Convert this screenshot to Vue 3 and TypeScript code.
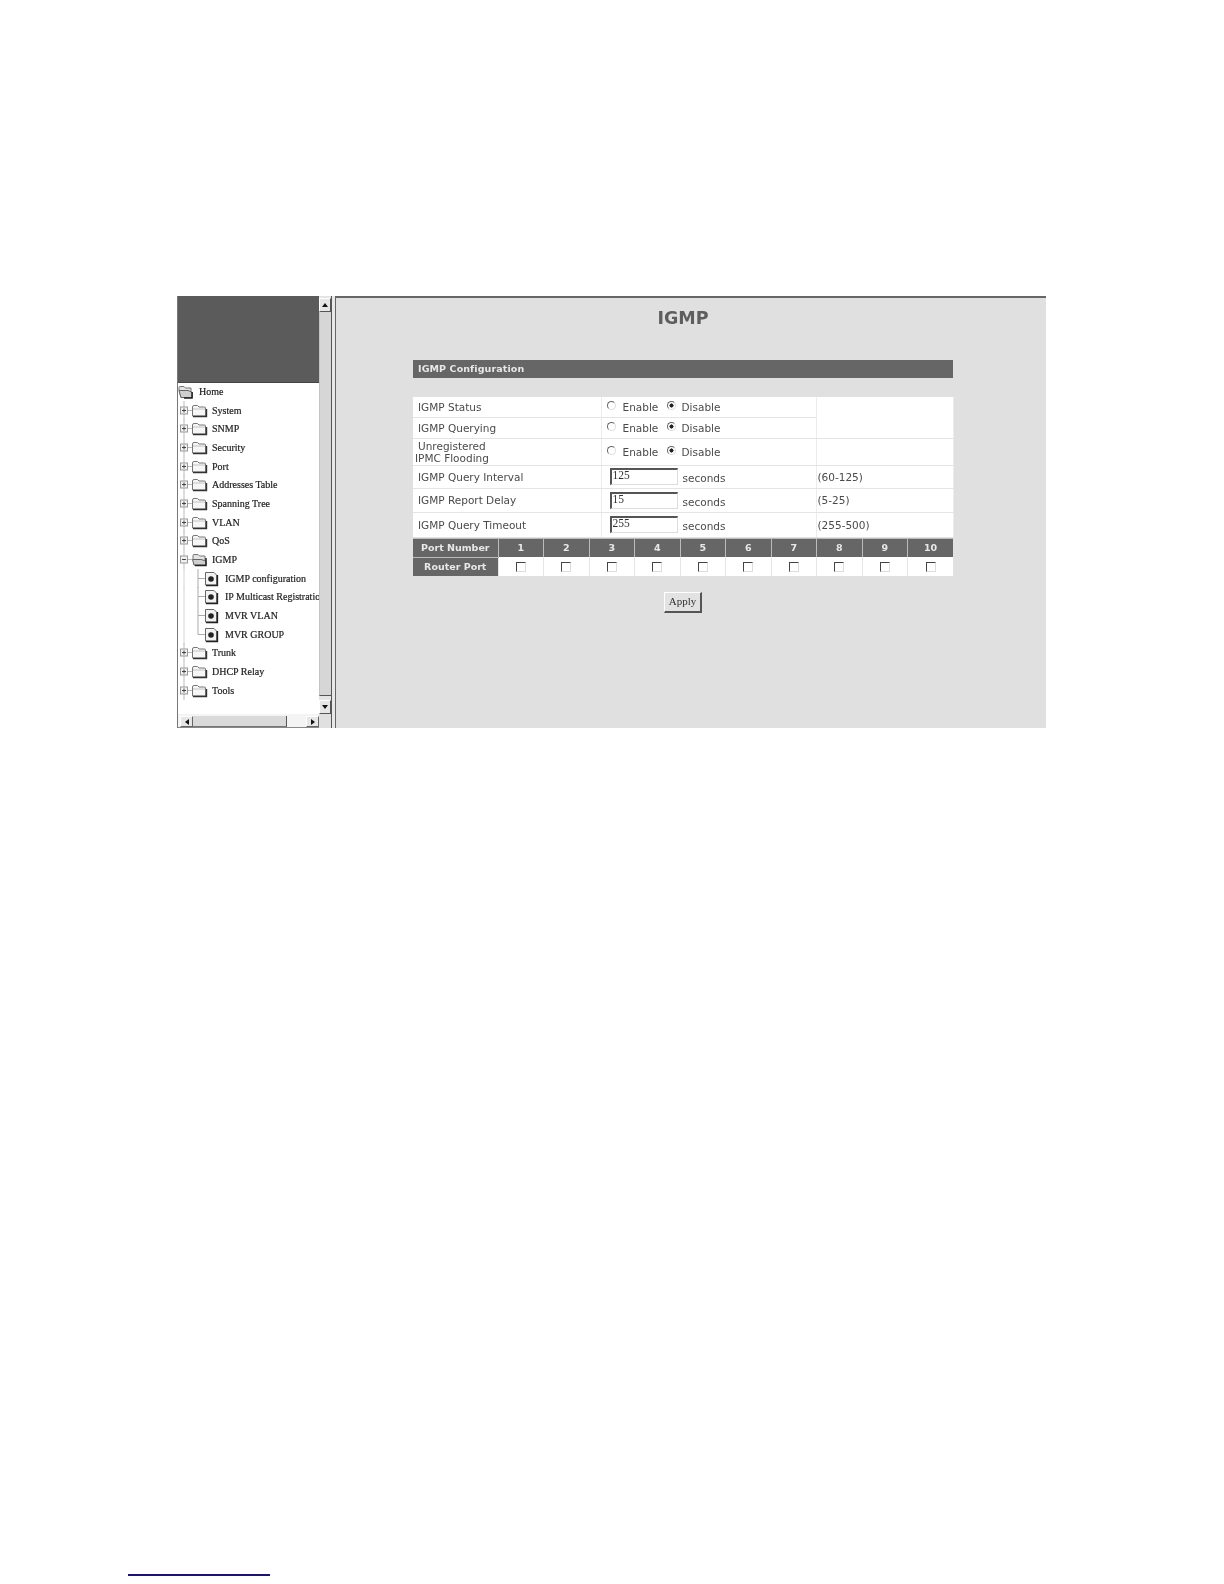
<script setup lang="ts">
type Kind = 'root' | 'closed' | 'open' | 'leaf'
interface TreeRow { label: string; kind: Kind }

const tree: TreeRow[] = [
  { label: 'Home', kind: 'root' },
  { label: 'System', kind: 'closed' },
  { label: 'SNMP', kind: 'closed' },
  { label: 'Security', kind: 'closed' },
  { label: 'Port', kind: 'closed' },
  { label: 'Addresses Table', kind: 'closed' },
  { label: 'Spanning Tree', kind: 'closed' },
  { label: 'VLAN', kind: 'closed' },
  { label: 'QoS', kind: 'closed' },
  { label: 'IGMP', kind: 'open' },
  { label: 'IGMP configuration', kind: 'leaf' },
  { label: 'IP Multicast Registration', kind: 'leaf' },
  { label: 'MVR VLAN', kind: 'leaf' },
  { label: 'MVR GROUP', kind: 'leaf' },
  { label: 'Trunk', kind: 'closed' },
  { label: 'DHCP Relay', kind: 'closed' },
  { label: 'Tools', kind: 'closed' },
]

const ports = [1, 2, 3, 4, 5, 6, 7, 8, 9, 10]
const intervals = [
  { label: 'IGMP Query Interval', value: '125', range: '(60-125)', cls: 'r4' },
  { label: 'IGMP Report Delay', value: '15', range: '(5-25)', cls: 'r5' },
  { label: 'IGMP Query Timeout', value: '255', range: '(255-500)', cls: 'r6' },
]
</script>

<template>
  <div class="page">
    <div class="frame">
      <aside class="side">
        <div class="tree">
          <div class="tree-head"></div>
          <ul class="tree-list">
            <li v-for="row in tree" :key="row.label" class="tree-row" :class="row.kind">
              <svg v-if="row.kind === 'root'" class="ico" width="21" height="19" viewBox="0 0 21 19">
                <path d="M1 8 V5.5 Q1 4.5 2 4.5 H6 L7.5 6 H13 V15.5 H3 Z" fill="#e4e4e4" stroke="#777" />
                <path d="M1 8.5 H10 L14.5 10.5 V15.5 H3 Z" fill="#cfcfcf" stroke="#666" />
                <path d="M14 10 V16 H6" stroke="#222" stroke-width="1.5" fill="none" />
              </svg>
              <svg v-else-if="row.kind === 'closed'" class="ico" width="34" height="19" viewBox="0 0 34 19">
                <path d="M6 0 V19 M9 9.5 H14" stroke="#bbb" fill="none" />
                <rect x="2.5" y="6" width="7" height="7" fill="#f0f0f0" stroke="#999" />
                <path d="M4 9.5 H8 M6 7.5 V11.5" stroke="#444" />
                <path d="M14.5 15 V6 Q14.5 4.5 16 4.5 H19.5 L21 6 H26.5 Q27.5 6 27.5 7 V15 Z" fill="#f6f6f6" stroke="#777" />
                <path d="M15 15.5 H28.5 V8" stroke="#333" fill="none" stroke-width="1.4" />
                <path d="M15 8 H27" stroke="#c4c4c4" />
              </svg>
              <svg v-else-if="row.kind === 'open'" class="ico" width="34" height="19" viewBox="0 0 34 19">
                <path d="M6 0 V19 M9 9.5 H14" stroke="#bbb" fill="none" />
                <rect x="2.5" y="6" width="7" height="7" fill="#f0f0f0" stroke="#999" />
                <path d="M4 9.5 H8" stroke="#444" />
                <path d="M15 9 V5.5 Q15 4.5 16 4.5 H20 L21.5 6 H27 V15 H16 Z" fill="#e4e4e4" stroke="#777" />
                <path d="M14.5 9.5 H23 L28 11 V15 H16 Z" fill="#cfcfcf" stroke="#666" />
                <path d="M28 8 V15.5 H17" stroke="#222" stroke-width="1.5" fill="none" />
              </svg>
              <svg v-else class="ico" width="47" height="19" viewBox="0 0 47 19">
                <path d="M6 0 V19" stroke="#d4d4d4" fill="none" />
                <path v-if="row.label !== 'MVR GROUP'" d="M20 0 V19 M20 9.5 H27" stroke="#aaa" fill="none" />
                <path v-else d="M20 0 V9.5 H27" stroke="#aaa" fill="none" />
                <path d="M27.5 3.5 H36 L38.5 6 V16 H27.5 Z" fill="#f2f2f2" stroke="#666" />
                <circle cx="33" cy="10" r="2.8" fill="#222" />
                <path d="M28 16.5 H39.5 V6" stroke="#222" fill="none" stroke-width="1.3" />
              </svg>
              <span class="tree-label">{{ row.label }}</span>
            </li>
          </ul>
        </div>

        <div class="vbar">
          <div class="sbtn up"><i class="tri tri-up"></i></div>
          <div class="vtrack"></div>
          <div class="sbtn down"><i class="tri tri-down"></i></div>
        </div>

        <div class="hbar">
          <div class="hbtn"><i class="tri tri-left"></i></div>
          <div class="hthumb"></div>
          <div class="htrack"></div>
          <div class="hbtn"><i class="tri tri-right"></i></div>
        </div>
        <div class="corner"></div>
      </aside>

      <div class="divider"></div>

      <main class="main">
        <div class="content">
          <h1 class="title">IGMP</h1>
          <div class="bar">IGMP Configuration</div>

          <table class="config">
            <colgroup>
              <col class="c1" />
              <col class="c2" />
              <col class="c3" />
            </colgroup>
            <tbody>
              <tr class="r1">
                <td class="name">IGMP Status</td>
                <td>
                  <div class="choice">
                    <input class="radio" type="radio" name="status" />
                    <span class="opt-a">Enable</span>
                    <input class="radio" type="radio" name="status" checked />
                    <span>Disable</span>
                  </div>
                </td>
                <td rowspan="2"></td>
              </tr>
              <tr class="r2">
                <td class="name">IGMP Querying</td>
                <td>
                  <div class="choice">
                    <input class="radio" type="radio" name="query" />
                    <span class="opt-a">Enable</span>
                    <input class="radio" type="radio" name="query" checked />
                    <span>Disable</span>
                  </div>
                </td>
              </tr>
              <tr class="r3">
                <td class="name two">
                  <span class="first">Unregistered</span><br />IPMC Flooding
                </td>
                <td>
                  <div class="choice">
                    <input class="radio" type="radio" name="flood" />
                    <span class="opt-a">Enable</span>
                    <input class="radio" type="radio" name="flood" checked />
                    <span>Disable</span>
                  </div>
                </td>
                <td></td>
              </tr>
              <tr v-for="item in intervals" :key="item.label" :class="item.cls">
                <td class="name">{{ item.label }}</td>
                <td>
                  <div class="valued">
                    <input class="num" type="text" :value="item.value" />
                    <span class="unit">seconds</span>
                  </div>
                </td>
                <td class="range">{{ item.range }}</td>
              </tr>
            </tbody>
          </table>

          <table class="ports">
            <colgroup>
              <col class="p1" />
              <col v-for="p in ports" :key="p" />
            </colgroup>
            <tbody>
              <tr>
                <th class="side-head">Port Number</th>
                <th v-for="p in ports" :key="p">{{ p }}</th>
              </tr>
              <tr>
                <th class="side-head">Router Port</th>
                <td v-for="p in ports" :key="p"><input class="check" type="checkbox" /></td>
              </tr>
            </tbody>
          </table>

          <div class="actions">
            <button class="apply" type="button">Apply</button>
          </div>
        </div>
      </main>
    </div>
    <div class="footnote"></div>
  </div>
</template>

<style scoped>
.page {
  box-sizing: border-box;
  width: 1224px;
  height: 1584px;
  padding: 296px 0 0 128px;
  background: #fff;
  overflow: hidden;
}
.frame {
  display: flex;
  width: 869px;
  height: 432px;
  margin-left: 49px;
  filter: blur(0.5px);
}

/* left tree frame */
.side {
  display: grid;
  grid-template-columns: 142px 13px;
  grid-template-rows: 418px 14px;
  width: 155px;
  flex: none;
}
.tree {
  display: flex;
  flex-direction: column;
  overflow: hidden;
  background: #fff;
  border-left: 1px solid #777;
}
.tree-head {
  height: 87px;
  flex: none;
  background: #5b5b5b;
  border-bottom: 1px solid #444;
  box-sizing: border-box;
}
.tree-list {
  list-style: none;
  margin: -1px 0 0;
  padding: 0;
}
.tree-row {
  display: flex;
  align-items: center;
  height: 18.7px;
  white-space: nowrap;
  font: 10px "Liberation Serif", serif;
  color: #222;
  -webkit-text-stroke: 0.2px #222;
}
.ico {
  flex: none;
  display: block;
}
.tree-label {
  line-height: 19px;
}

.vbar {
  display: flex;
  flex-direction: column;
  background: #e4e4e4;
  border-right: 1px solid #555;
  box-sizing: border-box;
  padding-top: 2px;
}
.sbtn {
  display: flex;
  align-items: center;
  justify-content: center;
  height: 12px;
  flex: none;
  background: #e6e6e6;
  border: 1px solid;
  border-color: #fff #555 #555 #fff;
}
.vtrack {
  flex: 1;
  margin-bottom: 4px;
  background: #d6d6d6;
  border-bottom: 1px solid #555;
  border-left: 1px solid #c4c4c4;
}
.hbar {
  display: flex;
  align-items: stretch;
  background: #f4f4f4;
  border-left: 1px solid #777;
  border-bottom: 1px solid #888;
  padding: 2px 0 0 2px;
}
.hbtn {
  display: flex;
  align-items: center;
  justify-content: center;
  width: 11px;
  flex: none;
  background: #e6e6e6;
  border: 1px solid;
  border-color: #fff #666 #666 #fff;
}
.hthumb {
  width: 93px;
  flex: none;
  background: #dadada;
  border-right: 1px solid #555;
  border-bottom: 1px solid #777;
}
.htrack {
  flex: 1;
  background: #f4f4f4;
}
.corner {
  background: #e0e0e0;
  border-right: 1px solid #555;
}
.tri {
  display: block;
  width: 0;
  height: 0;
  border: 3px solid transparent;
}
.tri-up {
  border-bottom: 4px solid #111;
  border-top-width: 0;
}
.tri-down {
  border-top: 4px solid #111;
  border-bottom-width: 0;
}
.tri-left {
  border-right: 4px solid #111;
  border-left-width: 0;
}
.tri-right {
  border-left: 4px solid #111;
  border-right-width: 0;
}

.divider {
  width: 4px;
  flex: none;
  background: #e8e8e8;
  border-right: 1px solid #666;
  box-sizing: border-box;
}

/* right content frame */
.main {
  flex: 1;
  box-sizing: border-box;
  background: #e0e0e0;
  border-top: 2px solid #666;
  padding-left: 77px;
  font-family: "DejaVu Sans", Verdana, sans-serif;
  color: #4a4a4a;
}
.content {
  width: 540px;
}
.title {
  margin: 0 0 32px;
  padding-top: 10px;
  height: 20px;
  line-height: 20px;
  font-size: 17.5px;
  font-weight: 700;
  text-align: center;
  color: #5e5e5e;
}
.bar {
  box-sizing: border-box;
  height: 18px;
  line-height: 17px;
  padding-left: 5px;
  background: #666;
  color: #e8e8e8;
  font-size: 9.5px;
  font-weight: 700;
  letter-spacing: 0.1px;
  margin-bottom: 19px;
}
.config {
  width: 540px;
  table-layout: fixed;
  border-collapse: collapse;
  background: #fff;
  font-size: 10.5px;
}
.c1 { width: 188px; }
.c2 { width: 215px; }
.c3 { width: 137px; }
.config td {
  padding: 0;
  border-right: 1px solid #ececec;
  border-bottom: 1px solid #e4e4e4;
  white-space: nowrap;
}
.r1 { height: 20px; }
.r2 { height: 21px; }
.r3 { height: 27px; }
.r4 { height: 23px; }
.r5 { height: 24px; }
.r6 { height: 25px; }
.name {
  padding-left: 5px !important;
}
.name.two {
  padding-left: 2px !important;
  line-height: 12px;
}
.first {
  margin-left: 3px;
}
.choice {
  display: flex;
  align-items: center;
  padding-left: 5px;
}
.radio {
  appearance: none;
  box-sizing: border-box;
  width: 9px;
  height: 9px;
  margin: -2px 6px 0 0;
  border-radius: 50%;
  border: 1px solid #666;
  border-right-color: #ddd;
  border-bottom-color: #ddd;
  background: #fff;
  flex: none;
}
.radio:first-child {
  margin-right: 7px;
}
.radio:checked {
  background: radial-gradient(circle, #222 0 1.8px, #fff 2.3px);
}
.opt-a {
  width: 44px;
}
.valued {
  display: flex;
  align-items: center;
  padding-left: 8px;
}
.num {
  box-sizing: border-box;
  width: 68px;
  height: 17px;
  margin: 0 5px 0 0;
  padding: 0 1px 4px;
  background: #fff;
  border: 1px solid;
  border-color: #555 #ddd #ddd #555;
  border-width: 2px 1px 1px 2px;
  font: 11.5px "Liberation Serif", serif;
  color: #333;
  outline: none;
}
.unit {
  padding-top: 3px;
}
.range {
  padding-left: 1px !important;
}
.ports {
  width: 540px;
  table-layout: fixed;
  border-collapse: collapse;
  background: #fff;
  font-size: 9.5px;
}
.p1 { width: 85px; }
.ports th {
  padding: 0;
  height: 19px;
  background: #666;
  color: #e8e8e8;
  font-weight: 700;
  text-align: center;
  border-left: 1px solid #bbb;
  border-top: 1px solid #bbb;
  box-sizing: border-box;
}
.ports td {
  padding: 0;
  height: 19px;
  text-align: center;
  vertical-align: middle;
  border-left: 1px solid #e6e6e6;
}
.ports .side-head {
  border-left: 0;
}
.check {
  appearance: none;
  display: block;
  box-sizing: border-box;
  width: 10px;
  height: 10px;
  margin: 0 auto;
  border: 1px solid;
  border-color: #444 #ddd #ddd #444;
  background: #fff;
}
.actions {
  display: flex;
  justify-content: center;
  padding-top: 16px;
}
.apply {
  box-sizing: border-box;
  width: 38px;
  height: 21px;
  padding: 0 0 3px;
  background: #e2e2e2;
  border: 1px solid;
  border-color: #fff #555 #555 #fff;
  border-width: 1px 2px 2px 1px;
  font: 11px "Liberation Serif", serif;
  color: #333;
}
.footnote {
  width: 142px;
  height: 1.5px;
  margin-top: 846px;
  background: #14147a;
}
</style>

<style>
html, body {
  margin: 0;
  background: #fff;
}
</style>
